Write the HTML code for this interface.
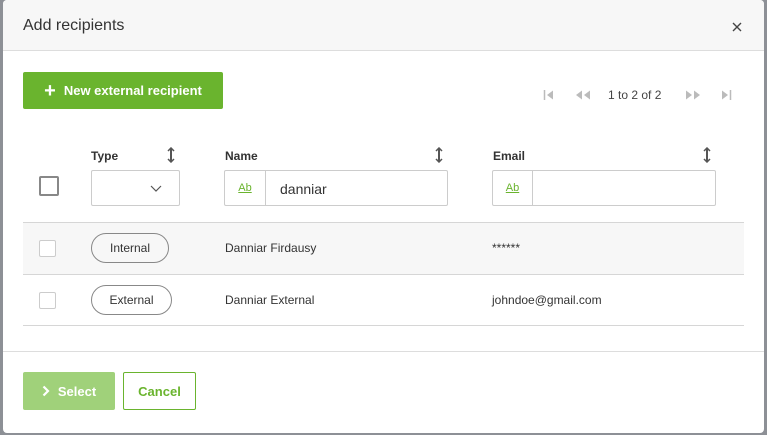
<!DOCTYPE html>
<html><head><style>
*{box-sizing:border-box;margin:0;padding:0}
body{width:767px;height:435px;background:#8d9096;font-family:"Liberation Sans",sans-serif;position:relative;overflow:hidden;color:#333}
.dlg{position:absolute;left:3px;top:0;width:761px;height:433px;background:#fff;border-radius:4px;overflow:hidden}
.hdr{position:absolute;left:0;top:0;width:100%;height:51px;background:#f7f7f7;border-bottom:1px solid #ddd}
.hdr .t{position:absolute;left:20px;top:17px;font-size:16px;color:#333}
.abs{position:absolute}
.btn{position:absolute;border-radius:2px;font-size:13px;font-weight:bold;display:flex;align-items:center;justify-content:center}
.pg{position:absolute;top:88px;font-size:12px;color:#444}
.th{position:absolute;top:149px;font-size:12px;font-weight:bold;color:#333}
.box{position:absolute;border:1px solid #ccc;border-radius:2px;background:#fff}
.ab{position:absolute;top:0;width:32px;height:100%;border-right:1px solid #ccc;color:#6ab42e;font-size:11px;text-decoration:underline;display:flex;align-items:center;justify-content:center}
.line{position:absolute;left:20px;width:721px;height:1px;background:#d6d6d6}
.cb{position:absolute;left:36px;width:17px;height:17px;border:1px solid #ccc;border-radius:2px;background:#fff}
.pill{position:absolute;left:88px;height:30px;border:1px solid #888;border-radius:15px;font-size:12px;display:flex;align-items:center;justify-content:center;color:#333}
.cell{position:absolute;font-size:12px;color:#333}
</style></head><body>
<div class="dlg">
<div class="hdr"><div class="t">Add recipients</div>
<svg class="abs" style="left:729px;top:22px" width="10" height="10" viewBox="0 0 10 10"><path d="M1 1L9 9M9 1L1 9" stroke="#444" stroke-width="1.4"/></svg></div>
<div class="btn" style="left:20px;top:72px;width:200px;height:37px;background:#6ab42e;color:#fff"><span style="font-size:20px;margin-right:8px;line-height:1">+</span>New external recipient</div>
<svg class="abs" style="left:540px;top:89px" width="12" height="12" viewBox="0 0 12 12"><path d="M1.5 1v10" stroke="#bbb" stroke-width="1.5"/><path d="M10 1.5L4 6l6 4.5z" fill="#bbb"/></svg>
<svg class="abs" style="left:571px;top:89px" width="18" height="12" viewBox="0 0 18 12"><path d="M8 1.5L2 6l6 4.5zM16 1.5L10 6l6 4.5z" fill="#bbb"/></svg>
<div class="pg" style="left:605px">1 to 2 of 2</div>
<svg class="abs" style="left:681px;top:89px" width="18" height="12" viewBox="0 0 18 12"><path d="M2 1.5L8 6l-6 4.5zM10 1.5L16 6l-6 4.5z" fill="#bbb"/></svg>
<svg class="abs" style="left:717px;top:89px" width="12" height="12" viewBox="0 0 12 12"><path d="M10.5 1v10" stroke="#bbb" stroke-width="1.5"/><path d="M2 1.5L8 6l-6 4.5z" fill="#bbb"/></svg>
<div class="th" style="left:88px">Type</div>
<div class="th" style="left:222px">Name</div>
<div class="th" style="left:490px">Email</div>
<svg class="abs" style="left:164px;top:147px" width="8" height="16" viewBox="0 0 8 16"><path d="M4 2v12" stroke="#555" stroke-width="2"/><path d="M1 4L4 1l3 3M1 12l3 3 3-3" fill="none" stroke="#555" stroke-width="1.5"/></svg>
<svg class="abs" style="left:432px;top:147px" width="8" height="16" viewBox="0 0 8 16"><path d="M4 2v12" stroke="#555" stroke-width="2"/><path d="M1 4L4 1l3 3M1 12l3 3 3-3" fill="none" stroke="#555" stroke-width="1.5"/></svg>
<svg class="abs" style="left:700px;top:147px" width="8" height="16" viewBox="0 0 8 16"><path d="M4 2v12" stroke="#555" stroke-width="2"/><path d="M1 4L4 1l3 3M1 12l3 3 3-3" fill="none" stroke="#555" stroke-width="1.5"/></svg>
<div class="abs" style="left:36px;top:176px;width:20px;height:20px;border:2px solid #888;border-radius:2px"></div>
<div class="box" style="left:88px;top:170px;width:89px;height:36px"><svg class="abs" style="left:58px;top:14px" width="12" height="7" viewBox="0 0 12 7"><path d="M1 1l5 5 5-5" fill="none" stroke="#555" stroke-width="1.2"/></svg></div>
<div class="box" style="left:221px;top:170px;width:224px;height:36px"><div class="ab" style="left:0;width:41px">Ab</div><span class="abs" style="left:55px;top:10px;font-size:14px;color:#333">danniar</span></div>
<div class="box" style="left:489px;top:170px;width:224px;height:36px"><div class="ab" style="left:0;width:40px">Ab</div></div>
<div class="line" style="top:222px"></div>
<div class="abs" style="left:20px;top:223px;width:721px;height:51px;background:#f7f7f7"></div>
<div class="line" style="top:274px"></div>
<div class="line" style="top:325px"></div>
<div class="cb" style="top:240px"></div>
<div class="pill" style="top:233px;width:78px">Internal</div>
<div class="cell" style="left:222px;top:241px">Danniar Firdausy</div>
<div class="cell" style="left:489px;top:241px">******</div>
<div class="cb" style="top:292px"></div>
<div class="pill" style="top:285px;width:81px">External</div>
<div class="cell" style="left:222px;top:293px">Danniar External</div>
<div class="cell" style="left:489px;top:293px">johndoe@gmail.com</div>
<div class="abs" style="left:0;top:351px;width:100%;height:1px;background:#ddd"></div>
<div class="btn" style="left:20px;top:372px;width:92px;height:38px;background:#a0d17a;color:#fff"><svg width="8" height="12" viewBox="0 0 8 12" style="margin-right:8px"><path d="M1.5 1.5L6 6l-4.5 4.5" fill="none" stroke="#fff" stroke-width="2.2"/></svg>Select</div>
<div class="btn" style="left:120px;top:372px;width:73px;height:38px;border:1px solid #6ab42e;color:#6ab42e;background:#fff">Cancel</div>
</div>
</body></html>
